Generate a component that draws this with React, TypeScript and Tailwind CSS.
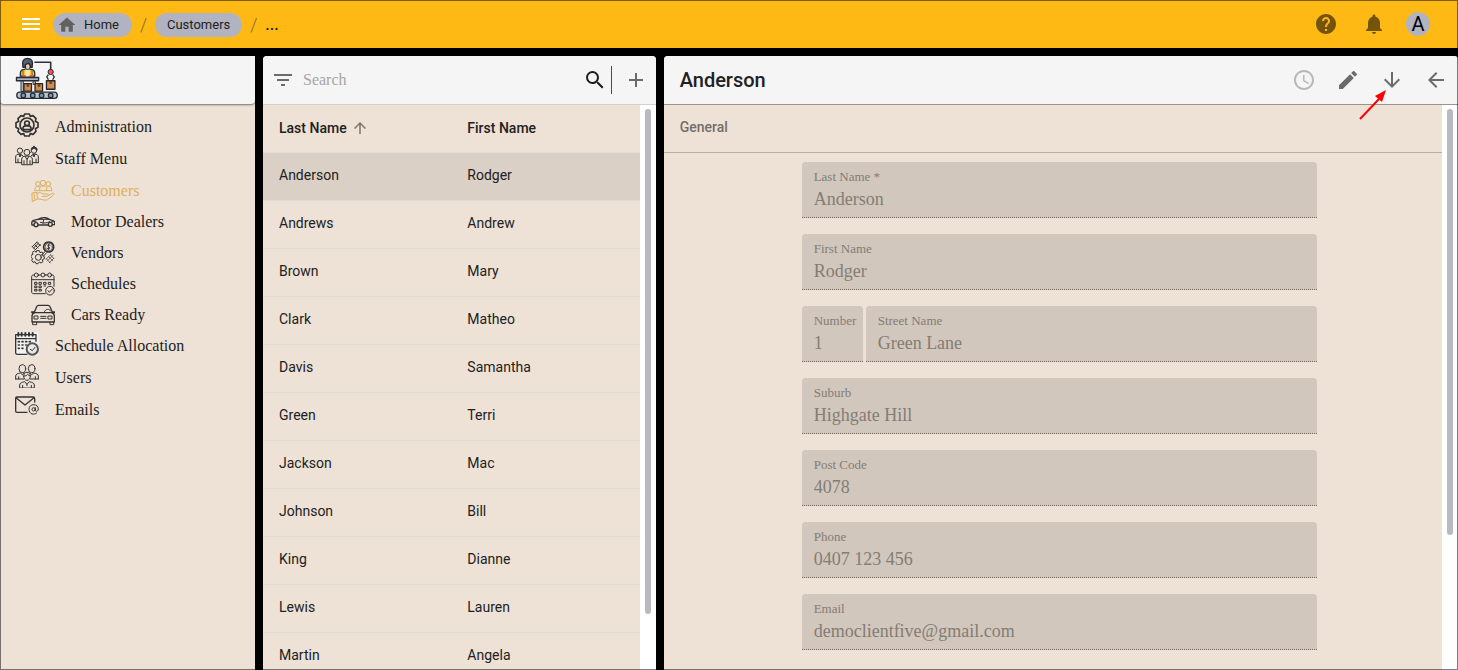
import { ReactNode, useState } from "react";
import {
  MdAccessTime,
  MdAdd,
  MdArrowBack,
  MdArrowDownward,
  MdArrowUpward,
  MdEdit,
  MdFilterList,
  MdHelp,
  MdHome,
  MdMenu,
  MdNotifications,
  MdSearch,
} from "react-icons/md";
import clsx from "clsx";

interface Customer {
  lastName: string;
  firstName: string;
}

interface NavItem {
  label: string;
  icon: ReactNode;
  child?: boolean;
}

const customers: Customer[] = [
  { lastName: "Anderson", firstName: "Rodger" },
  { lastName: "Andrews", firstName: "Andrew" },
  { lastName: "Brown", firstName: "Mary" },
  { lastName: "Clark", firstName: "Matheo" },
  { lastName: "Davis", firstName: "Samantha" },
  { lastName: "Green", firstName: "Terri" },
  { lastName: "Jackson", firstName: "Mac" },
  { lastName: "Johnson", firstName: "Bill" },
  { lastName: "King", firstName: "Dianne" },
  { lastName: "Lewis", firstName: "Lauren" },
  { lastName: "Martin", firstName: "Angela" },
];

const Icon = ({ children, width = 3 }: { children: ReactNode; width?: number }) => (
  <svg
    viewBox="0 0 72 72"
    className="size-6 shrink-0"
    fill="none"
    stroke="currentColor"
    strokeWidth={width}
    strokeLinecap="round"
    strokeLinejoin="round"
    aria-hidden="true"
  >
    {children}
  </svg>
);

const AdminIcon = () => (
  <Icon width={5}>
    <path d="M29 3h14l3 7 8-2 9 9-2 8 8 4v14l-8 4 2 8-9 9-8-2-3 7H29l-3-7-8 2-9-9 2-8-8-4V29l8-4-2-8 9-9 8 2z" />
    <circle cx="36" cy="36" r="21" />
    <circle cx="36" cy="31" r="7" />
    <path d="M24 50V46c0-5 4-8 12-8s12 3 12 8v4z" />
  </Icon>
);

const StaffIcon = () => (
  <Icon>
    <circle cx="15" cy="17" r="8" />
    <circle cx="36" cy="22" r="9" />
    <circle cx="57" cy="17" r="8" />
    <path d="M50 13c2-7 12-8 15 0M57 8V5" strokeWidth="6" />
    <path d="M2 53V36c0-6 5-9 12-9l9 5M70 53V36c0-6-5-9-12-9l-9 5M2 53h18M52 53h18" />
    <path d="M20 58V42c0-6 6-9 16-9s16 3 16 9v16zM30 34l6 9 6-9M36 43v14M9 42v10M63 42v10M27 47v10M45 47v10M12 28l3 8 3-8M54 28l3 8 3-8" />
  </Icon>
);

const CustomersIcon = () => (
  <Icon width={3}>
    <circle cx="21" cy="15" r="7" />
    <circle cx="36" cy="12" r="8" />
    <circle cx="52" cy="15" r="7" />
    <path d="M12 35v-5c0-5 4-8 9-8 4 0 5 2 5 5M62 35v-5c0-5-4-8-10-8-4 0-5 2-5 5M26 35V28c0-5 4-7 10-7s11 2 11 7v7M12 35h50" />
    <path d="M4 42l13-2 3 20-15 7zM17 43c9-4 14-2 20 2h10c6 0 6 7 0 7H34M52 49l13-6c5-1 5 3 2 5L53 60c-5 4-11 4-19 2l-14-3M9 45l3 18" />
  </Icon>
);

const MotorIcon = () => (
  <Icon width={4}>
    <path d="M9 45H3c-2-8-1-12 4-14l14-3c6-4 14-6 22-5 6 1 11 4 16 7 6 2 10 3 12 6v8h-7M21 45h30" />
    <circle cx="15" cy="44" r="6" />
    <circle cx="58" cy="43" r="6" />
    <path d="M21 28h33l-13-5M31 28l3-4M38 29l-2 11M5 35h10M28 37c10 4 20 2 28-2M62 35h9" strokeWidth="3" />
  </Icon>
);

const VendorsIcon = () => (
  <Icon>
    <circle cx="53" cy="18" r="15" strokeWidth="5" strokeDasharray="5 2" />
    <circle cx="53" cy="18" r="11" strokeWidth="2" />
    <path d="M57 13c-7-4-9 3-4 5s4 8-5 4M53 10v16" />
    <path d="M18 29h7l2 6 6-2 4 5-3 5 6 4v6l-6 3 2 6-6 4-5-3-4 5h-6l-3-6-6 2-4-6 3-5-5-4v-6l6-3-2-6 6-4 5 3z" />
    <circle cx="22" cy="49" r="9" />
    <path d="M4 17L18 3M8 21L23 6M13 26L28 11M4 17l9 9M10 10l11 11M17 4l11 9M42 32L29 44M46 36L38 45" />
    <path d="M45 55l15-15M49 60l17-17M55 65l14-14M46 53l12 13M53 47l12 12M59 42l9 10" strokeWidth="2" />
  </Icon>
);

const SchedulesIcon = () => (
  <Icon>
    <path d="M10 9H7c-3 0-5 2-5 5v46c0 3 2 5 5 5h36M60 9h4c3 0 5 2 5 5v29M22 9h7M43 9h7M2 23h67" />
    <circle cx="16" cy="9" r="6" />
    <circle cx="36" cy="9" r="6" />
    <circle cx="56" cy="9" r="6" />
    <path d="M12 31h6v6h-6zM25 31h6v6h-6zM39 31h6v6h-6zM53 31h6v6h-6zM12 42h6v5h-6zM25 42h6v5h-6zM39 42h5M12 52h6v5h-6zM25 52h6v5h-6z" />
    <circle cx="57" cy="56" r="13" />
    <path d="M51 56l4 5 9-10" />
  </Icon>
);

const CarIcon = () => (
  <Icon width={4}>
    <path d="M9 30L17 11c1-3 3-4 6-4h28c3 0 5 1 6 4l8 19M12 29h50c5 2 8 5 8 10v18H3V39c0-5 3-8 9-10zM5 31l-3-4h7M68 31l3-4h-7" />
    <path d="M5 57v8h12v-8M57 57v8h11v-8M10 39h11v9H10zM52 39h11v9H52zM29 40h16M29 46h16M40 27c3-10 15-11 19-3" strokeWidth="3" />
  </Icon>
);

const AllocationIcon = () => (
  <Icon width={4}>
    <rect x="1" y="1" width="70" height="70" fill="#f4f2f1" stroke="none" />
    <path d="M36 67H7c-3 0-5-2-5-5V8h61v20M2 20h61" />
    <path d="M10 3v8M20 3v8M31 3v8M42 3v8M53 3v8" strokeWidth="6" />
    <path d="M10 29h3M21 29h3M32 29h3M43 29h3M10 39h3M21 39h3M32 39h2M10 49h3M21 49h3" strokeWidth="5" />
    <circle cx="52" cy="51" r="17" fill="#ece9e7" strokeWidth="6" stroke="#555" />
    <path d="M46 52l6 4 8-10" strokeWidth="3" />
  </Icon>
);

const UsersIcon = () => (
  <Icon width={3}>
    <ellipse cx="22" cy="14" rx="10" ry="12" />
    <ellipse cx="50" cy="14" rx="10" ry="12" />
    <path d="M2 45v-9c0-5 6-8 14-9l6 5 6-5M70 45v-9c0-5-6-8-14-9l-6 5-6-5M2 45h24M46 45h24M11 38v7M61 38v7" />
    <path d="M26 36c0-7 4-11 10-11s10 4 10 11-4 13-10 13-10-6-10-13c7 0 10-2 12-5 2 3 5 4 8 5" />
    <path d="M14 71v-8c0-6 7-8 15-10l7 8 7-8c8 2 15 4 15 10v8zM23 64v7M49 64v7M36 61v4" />
  </Icon>
);

const EmailIcon = () => (
  <Icon width={4}>
    <path d="M36 49H6c-2 0-4-2-4-4V7c0-2 2-4 4-4h48c3 0 5 2 5 5v10M3 5l27 22L57 5" />
    <path d="M65 51c-7 7-23 4-23-11 0-9 6-14 14-14s14 5 14 13-9 9-9 3v-7" strokeWidth="3" />
    <circle cx="56" cy="40" r="5" strokeWidth="3" />
  </Icon>
);

const Logo = () => (
  <svg viewBox="45 168 132 135" className="h-11 w-11 shrink-0" strokeLinejoin="round" role="img" aria-label="Company logo">
    <path d="M103 187h50v26" fill="none" stroke="#2d3140" strokeWidth="5" />
    <path d="M60 230v-10c0-7 6-11 15-11h15c9 0 14 4 14 11v10z" fill="#f0c541" stroke="#262a33" strokeWidth="4" />
    <path d="M75 209h14v22H75z" fill="#f8e9a5" />
    <path d="M68 212v19M96 212v19" stroke="#8c7b28" strokeWidth="4" />
    <path d="M66 229h10M89 229h10" stroke="#e95a43" strokeWidth="5" />
    <path d="M74 188h17v14c0 9-17 9-17 0z" fill="#f6cdb0" stroke="#262a33" strokeWidth="3" />
    <path d="M68 203c-4-19 1-28 14-28s18 9 14 28h-6c2-8 0-10-6-13-4 3-7 3-9 5l1 8z" fill="#56616f" stroke="#202630" strokeWidth="4" />
    <path d="M48 234h68v10H48z" fill="#a7b6c5" stroke="#252b35" strokeWidth="4" />
    <path d="M62 245h7v32h-7zM99 245h7v10h-7z" fill="#cbd4de" stroke="#252b35" strokeWidth="3" />
    <circle cx="153" cy="217" r="8" fill="#ee5d4c" stroke="#2b2a35" strokeWidth="3" />
    <path d="M146 225l-5 7 5 9M159 225l5 7-5 9" fill="none" stroke="#2b2a35" strokeWidth="4" />
    <path d="M71 253h23v23H71zM105 253h23v23h-23zM140 244h26v26h-26z" fill="#cf8d51" stroke="#2b2622" strokeWidth="4" />
    <path d="M79 254h8v8h-8zM113 254h8v8h-8zM149 245h8v8h-8z" fill="#6d4025" />
    <rect x="49" y="279" width="124" height="19" rx="9" fill="#b9c4cf" stroke="#252b35" strokeWidth="4" />
    {[69, 98, 125, 153].map((x) => (
      <circle key={x} cx={x} cy="289" r="7" fill="#8898a8" stroke="#252b35" strokeWidth="4" />
    ))}
  </svg>
);

const navItems: NavItem[] = [
  { label: "Administration", icon: <AdminIcon /> },
  { label: "Staff Menu", icon: <StaffIcon /> },
  { label: "Customers", icon: <CustomersIcon />, child: true },
  { label: "Motor Dealers", icon: <MotorIcon />, child: true },
  { label: "Vendors", icon: <VendorsIcon />, child: true },
  { label: "Schedules", icon: <SchedulesIcon />, child: true },
  { label: "Cars Ready", icon: <CarIcon />, child: true },
  { label: "Schedule Allocation", icon: <AllocationIcon /> },
  { label: "Users", icon: <UsersIcon /> },
  { label: "Emails", icon: <EmailIcon /> },
];

const IconButton = ({ label, className, children }: { label: string; className?: string; children: ReactNode }) => (
  <button type="button" aria-label={label} className={clsx("flex shrink-0 items-center justify-center", className)}>
    {children}
  </button>
);

const Field = ({ id, label, value, className }: { id: string; label: string; value: string; className?: string }) => (
  <div
    className={clsx(
      "flex h-14 flex-col overflow-hidden rounded-t border-b border-dotted border-[#75695f] bg-[#d1c7bc] pt-[7px] pl-3 text-[#857c75]",
      className
    )}
  >
    <label htmlFor={id} className="text-[13px] leading-4 whitespace-nowrap">{label}</label>
    <input id={id} readOnly defaultValue={value} className="w-full bg-transparent text-lg leading-7 outline-none" />
  </div>
);

const Scrollbar = ({ thumb }: { thumb: string }) => (
  <div className="flex w-4 shrink-0 justify-center bg-white pt-1">
    <div className={clsx("w-1.5 rounded-full bg-[#bab9c0]", thumb)} />
  </div>
);

const TopBar = () => (
  <header className="flex h-12 shrink-0 items-center bg-[#ffb915] pr-7 pl-[19px] text-[13px] text-[#212121]">
    <IconButton label="Menu" className="text-white">
      <MdMenu size={24} />
    </IconButton>
    <nav aria-label="Breadcrumb" className="ml-2.5 flex items-center pt-0.5">
      <a href="#home" className="flex h-6 items-center gap-[7px] rounded-full bg-[#b1b3c0] pr-[13px] pl-1">
        <MdHome size={20} className="text-[#616161]" />
        Home
      </a>
      <span className="w-[23px] text-center text-lg font-light text-[#8a681b]">/</span>
      <a href="#customers" className="flex h-6 items-center rounded-full bg-[#b1b3c0] px-3">
        Customers
      </a>
      <span className="w-[23px] text-center text-lg font-light text-[#8a681b]">/</span>
      <span className="text-base font-medium">...</span>
    </nav>
    <div className="ml-auto flex items-center gap-6 text-[#74530b]">
      <IconButton label="Help">
        <MdHelp size={24} />
      </IconButton>
      <IconButton label="Notifications">
        <MdNotifications size={24} />
      </IconButton>
      <IconButton label="Account" className="-ml-1 size-6 rounded-full bg-[#b1b3c0] text-xl text-black">
        A
      </IconButton>
    </div>
  </header>
);

const Sidebar = ({ active, onSelect }: { active: string; onSelect: (label: string) => void }) => (
  <aside className="flex min-h-0 flex-col bg-[#eee1d6]">
    <div className="flex h-12 shrink-0 items-center rounded-b bg-[#f5f5f5] pb-1 pl-[15px] shadow-[0_1px_2px_rgba(0,0,0,0.5)]">
      <Logo />
    </div>
    <nav className="flex flex-col pt-[7px] font-['Liberation_Serif',serif] text-base text-[#1c1c1c]">
      {navItems.map((item) => (
        <a
          key={item.label}
          href={"#" + item.label.toLowerCase().replace(" ", "-")}
          onClick={() => onSelect(item.label)}
          className={clsx(
            "flex items-center gap-4",
            item.child ? "h-[31px] pl-[31px]" : "h-8 pl-[15px]",
            item.label === active && "text-[#dcb05c]"
          )}
        >
          <span className={clsx(!item.child && "pb-1", item.label !== active && "text-[#333]")}>{item.icon}</span>
          {item.label}
        </a>
      ))}
    </nav>
  </aside>
);

const CustomerList = () => (
  <section className="flex min-h-0 flex-col overflow-hidden rounded-t bg-[#eee1d6]">
    <div className="flex h-12 shrink-0 items-center bg-[#f5f5f5] pr-2 pl-2 text-[#6b6b6b]">
      <IconButton label="Filter">
        <MdFilterList size={24} />
      </IconButton>
      <input
        aria-label="Search"
        placeholder="Search"
        className="ml-2 min-w-0 flex-1 bg-transparent font-['Liberation_Serif',serif] text-base outline-none placeholder:text-[#a5a5a5]"
      />
      <IconButton label="Run search" className="mr-1 text-[#1d1d1d]">
        <MdSearch size={24} />
      </IconButton>
      <div className="mr-3 h-7 w-px bg-[#424b5c]" />
      <IconButton label="Add customer">
        <MdAdd size={24} />
      </IconButton>
    </div>
    <div className="flex min-h-0 flex-1 border-t border-[#d3d1cf]">
      <div className="min-w-0 flex-1 overflow-hidden">
        <table className="w-full table-fixed border-separate border-spacing-0 text-left text-sm text-[#212121]">
          <thead>
            <tr className="h-12">
              <th className="border-b border-[#e0dedc] pb-0.5 pl-4 font-medium">
                <span className="flex items-center gap-1">
                  Last Name
                  <MdArrowUpward size={18} className="text-[#7c736b]" />
                </span>
              </th>
              <th className="border-b border-[#e0dedc] pb-0.5 pl-4 font-medium">First Name</th>
            </tr>
          </thead>
          <tbody>
            {customers.map((customer, i) => (
              <tr key={customer.lastName} className={clsx("h-12", i === 0 && "bg-[#dad0c5]")}>
                <td className="border-b border-[#e0dedc] pb-1 pl-4">{customer.lastName}</td>
                <td className="border-b border-[#e0dedc] pb-1 pl-4">{customer.firstName}</td>
              </tr>
            ))}
          </tbody>
        </table>
      </div>
      <Scrollbar thumb="h-[90%]" />
    </div>
  </section>
);

const CustomerDetail = () => (
  <section className="flex min-h-0 flex-col overflow-hidden rounded-t bg-[#eee1d6]">
    <div className="flex h-12 shrink-0 items-center bg-[#f5f5f5] pr-2.5 pl-4 text-[#6b6b6b]">
      <h1 className="text-xl font-medium text-[#212121]">Anderson</h1>
      <div className="ml-auto flex gap-5">
        <IconButton label="History" className="text-[#b8b8b8]">
          <MdAccessTime size={24} />
        </IconButton>
        <IconButton label="Edit">
          <MdEdit size={24} />
        </IconButton>
        <div className="relative">
          <IconButton label="Next">
            <MdArrowDownward size={24} />
          </IconButton>
          {/* Pointer calling out the next button */}
          <svg viewBox="0 0 30 32" className="pointer-events-none absolute top-5 right-4 h-8 w-[30px]" aria-hidden="true">
            <path d="M2 31L21 11" stroke="#ff0000" strokeWidth="2" />
            <path d="M28 2L24 14L17 8Z" fill="#ff0000" />
          </svg>
        </div>
        <IconButton label="Back">
          <MdArrowBack size={24} />
        </IconButton>
      </div>
    </div>
    <div className="flex min-h-0 flex-1 border-t border-[#9d938d]">
      <div className="min-w-0 flex-1 overflow-hidden">
        <div className="flex h-12 items-center border-b border-[#b5aeaa] px-4 pb-1">
          <h2 className="text-sm font-medium text-[#756e69]">General</h2>
        </div>
        <form className="mr-[125px] ml-[138px] flex flex-col gap-4 pt-[9px] font-['Liberation_Serif',serif]">
          <Field id="last-name" label="Last Name *" value="Anderson" />
          <Field id="first-name" label="First Name" value="Rodger" />
          <div className="flex gap-[3px]">
            <Field id="number" label="Number" value="1" className="w-[61px] shrink-0" />
            <Field id="street" label="Street Name" value="Green Lane" className="flex-1" />
          </div>
          <Field id="suburb" label="Suburb" value="Highgate Hill" />
          <Field id="post-code" label="Post Code" value="4078" />
          <Field id="phone" label="Phone" value="0407 123 456" />
          <Field id="email" label="Email" value="democlientfive@gmail.com" />
        </form>
      </div>
      <Scrollbar thumb="h-[76%]" />
    </div>
  </section>
);

export default function App() {
  const [active, setActive] = useState("Customers");

  return (
    <div className="relative flex h-screen flex-col overflow-hidden bg-black font-[Roboto,sans-serif]">
      <TopBar />
      <main className="grid min-h-0 flex-1 grid-cols-[255px_393fr_795fr] grid-rows-1 gap-2 pt-2">
        <Sidebar active={active} onSelect={setActive} />
        <CustomerList />
        <CustomerDetail />
      </main>
      {/* Thin frame over the whole window */}
      <div className="pointer-events-none absolute inset-0 border border-black/50" />
    </div>
  );
}
